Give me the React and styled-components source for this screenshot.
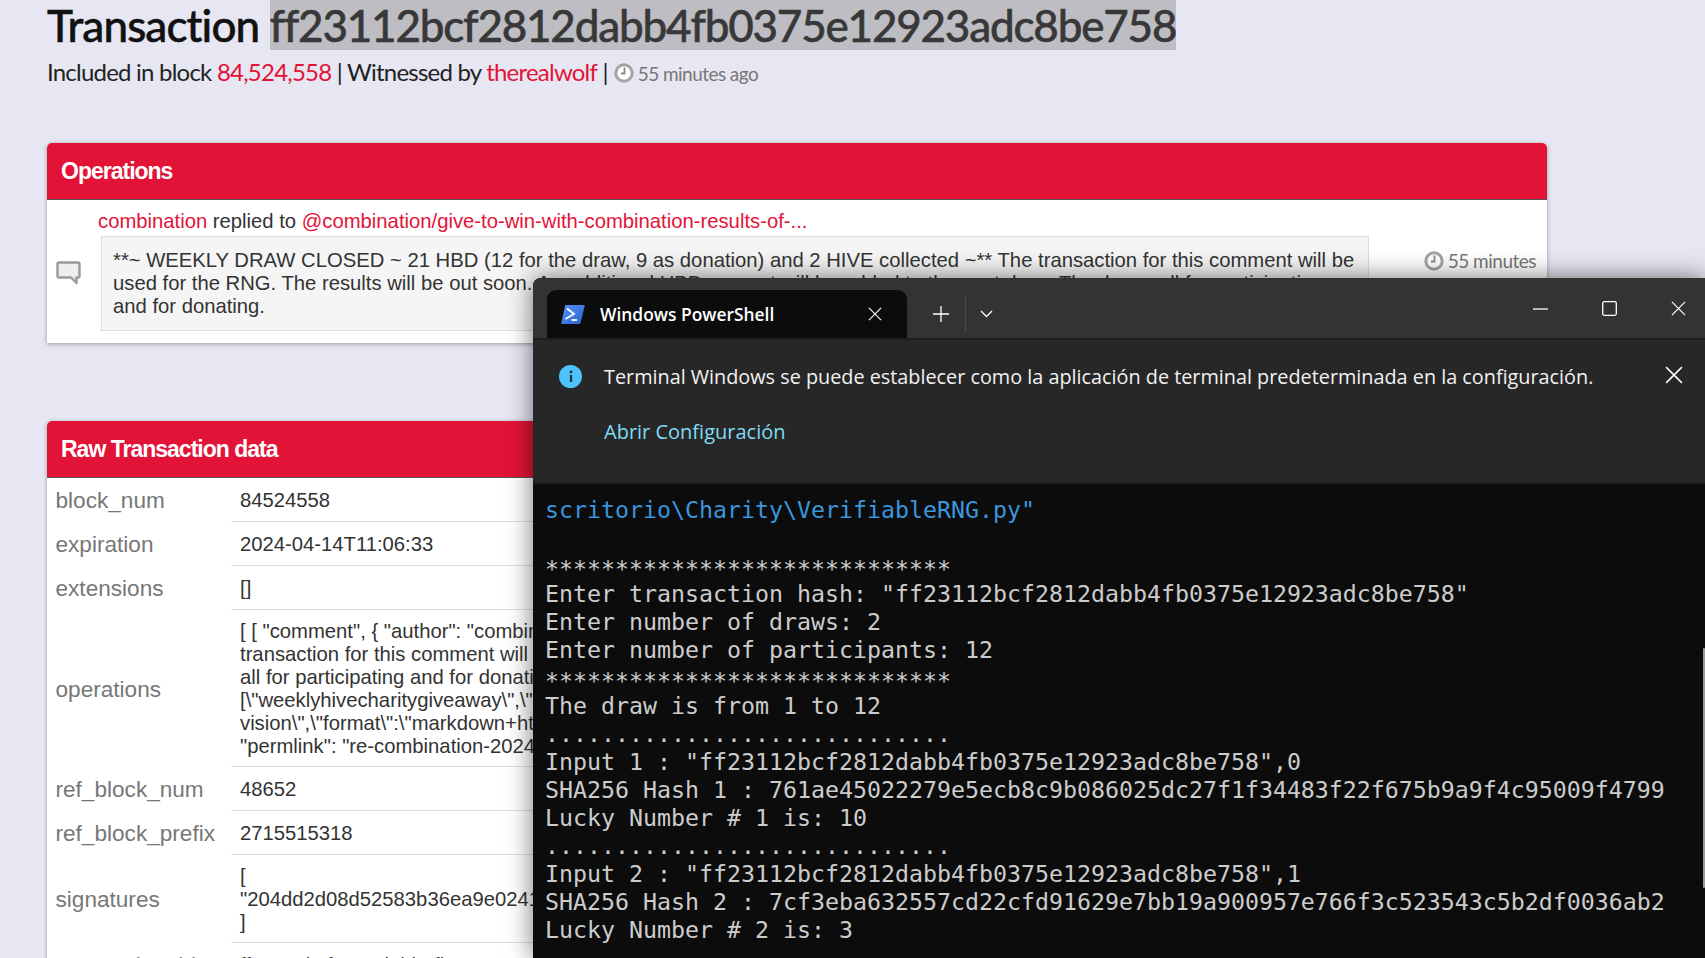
import styled, { createGlobalStyle } from "styled-components";

const GlobalStyle = createGlobalStyle`
  html, body {
    margin: 0;
    height: 958px;
    overflow: hidden;
    background: #e6e7f2;
  }
`;

const Page = styled.div`
  position: relative;
  width: 1705px;
  height: 958px;
  overflow: hidden;
  padding-left: 47px;
  box-sizing: border-box;
  font-family: "Liberation Sans", Arial, sans-serif;
`;

const Title = styled.h1`
  margin: 0;
  height: 50px;
  font-family: Lato, sans-serif;
  font-weight: 500;
  font-size: 44px;
  line-height: 50px;
  letter-spacing: -0.9px;
  -webkit-text-stroke: 0.5px currentColor;
  color: #111;
  white-space: nowrap;
`;

const Selected = styled.span`
  display: inline-block;
  height: 50px;
  background: #bdbdc3;
  color: #383838;
  letter-spacing: -1.2px;
`;

const Meta = styled.div`
  display: flex;
  align-items: center;
  height: 46px;
  padding-bottom: 4px;
  box-sizing: border-box;
  font-family: Lato, sans-serif;
  font-size: 24px;
  letter-spacing: -0.78px;
  color: #222;
  white-space: pre;
`;

const Link = styled.a`
  color: #e31337;
`;

const Ago = styled.span`
  display: inline-flex;
  align-items: center;
  gap: 4px;
  margin: 4px 0 0 6px;
  font-size: 19px;
  letter-spacing: -0.55px;
  color: #777;
`;

const Panel = styled.section`
  width: 1500px;
  margin-top: ${(p) => p.$top}px;
  background: #fff;
  border-radius: 5px 5px 0 0;
  box-shadow: 0 1px 4px rgba(0, 0, 0, 0.35);
`;

const PanelHead = styled.h2`
  margin: 0;
  height: 56px;
  padding-left: 14px;
  border-radius: 5px 5px 0 0;
  border-bottom: 1px solid #555;
  background: #e31337;
  color: #fff;
  font-size: 23px;
  font-weight: 700;
  letter-spacing: -1px;
  line-height: 56px;
`;

const OpRow = styled.div`
  display: flex;
  height: 143px;
`;

const OpIcon = styled.div`
  width: 50px;
  padding: 61px 0 0 9px;
  box-sizing: border-box;
`;

const OpMain = styled.div`
  width: 1272px;
  padding-top: 9px;
  font-size: 20.25px;
  color: #333;
`;

const OpLine = styled.div`
  height: 27px;
  line-height: 24px;
  padding-left: 1px;
`;

const Quote = styled.div`
  margin-left: 4px;
  height: 95px;
  padding: 12px 11px 0;
  box-sizing: border-box;
  border: 1px solid #ddd;
  background: #f5f5f5;
  font-size: 20.25px;
  line-height: 23px;
  color: #333;
`;

const OpTime = styled.div`
  display: flex;
  justify-content: flex-end;
  align-items: center;
  gap: 4px;
  flex: 1;
  height: 23px;
  margin-top: 49px;
  padding-right: 11px;
  font-family: Lato, sans-serif;
  font-size: 19px;
  letter-spacing: -0.5px;
  color: #777;
`;

const Row = styled.div`
  display: flex;
  align-items: center;
`;

const Label = styled.div`
  width: 184px;
  padding: 2px 0 0 8.5px;
  box-sizing: border-box;
  font-size: 22.6px;
  color: #777;
`;

const Value = styled.div`
  flex: 1;
  min-height: 25px;
  padding: 10px 9px 8px 9px;
  border-bottom: 1px solid #ddd;
  font-size: 20.25px;
  line-height: 23px;
  color: #333;
  white-space: pre;
  overflow: hidden;
  display: flex;
  flex-direction: column;
  justify-content: center;
`;

const Window = styled.div`
  position: absolute;
  left: 533px;
  top: 278px;
  right: 0;
  bottom: 0;
  display: flex;
  flex-direction: column;
  background: #0c0c0c;
  border-radius: 8px 0 0 0;
  box-shadow: 0 0 26px rgba(0, 0, 0, 0.55);
  font-family: "Open Sans", sans-serif;
  color: #fff;
`;

const TitleBar = styled.div`
  display: flex;
  align-items: flex-end;
  flex: none;
  height: 60px;
  padding-left: 14px;
  box-sizing: border-box;
  background: #333;
  border-radius: 8px 0 0 0;
`;

const Tab = styled.div`
  display: flex;
  align-items: center;
  width: 360px;
  height: 48px;
  padding: 0 25px 0 14px;
  box-sizing: border-box;
  border-radius: 9px 9px 0 0;
  background: #0c0c0c;
  font-size: 17.4px;
  font-weight: 600;
`;

const TabName = styled.span`
  flex: 1;
  margin-left: 15px;
`;

const TabTools = styled.div`
  display: flex;
  align-items: center;
  height: 36px;
  margin: 0 0 6px 26px;
`;

const ToolDivider = styled.div`
  width: 1px;
  height: 36px;
  margin: 0 14px 0 16px;
  background: #4a4a4a;
`;

const Caption = styled.div`
  display: flex;
  align-items: center;
  gap: 54px;
  margin: 0 19px 22px auto;
`;

const InfoBar = styled.div`
  flex: none;
  height: 146px;
  box-sizing: border-box;
  padding: 21px 20px 0 26px;
  background: #272727;
  border-top: 2px solid #1f1f1f;
  border-bottom: 2px solid #1e1e1e;
`;

const InfoRow = styled.div`
  display: flex;
  align-items: center;
  gap: 22px;
  height: 30px;
  font-size: 19.82px;
  color: #f2f2f2;
  white-space: nowrap;
`;

const InfoDot = styled.div`
  display: flex;
  align-items: center;
  justify-content: center;
  width: 23px;
  height: 23px;
  flex: none;
  border-radius: 50%;
  background: #4cc2ff;
`;

const InfoClose = styled.div`
  display: flex;
  margin: -2px 2px 0 auto;
`;

const InfoLink = styled.div`
  margin: 26px 0 0 45px;
  font-size: 20px;
  line-height: 30px;
  color: #7fdcf5;
`;

const Term = styled.pre`
  flex: 1;
  margin: 0;
  padding: 12px 0 0 12px;
  font-family: "DejaVu Sans Mono", monospace;
  font-size: 23.25px;
  line-height: 28px;
  color: #cccccc;
  position: relative;
`;

const TermBlue = styled.span`
  color: #3a96dd;
`;

const TermStars = styled.span`
  display: inline-block;
  transform: translateY(3px);
`;

const ScrollThumb = styled.div`
  position: absolute;
  right: 0;
  top: 164px;
  width: 2px;
  height: 240px;
  background: #9a9a9a;
  border-radius: 1px;
`;

const Clock = ({ size = 20 }) => (
  <svg width={size} height={size} viewBox="0 0 20 20">
    <circle cx="10" cy="10" r="8.2" fill="#fff" stroke="#a3a3a3" strokeWidth="3" />
    <path d="M10.5 4.5V10.5H7" fill="none" stroke="#888" strokeWidth="1.8" />
  </svg>
);

const Bubble = () => (
  <svg width="25" height="24" viewBox="0 0 25 24">
    <path
      d="M3 1.5H22Q23.5 1.5 23.5 3V15Q23.5 16.5 22 16.5H20.5V22L15 16.5H3Q1.5 16.5 1.5 15V3Q1.5 1.5 3 1.5Z"
      fill="#eeeeee"
      stroke="#999"
      strokeWidth="2.4"
      strokeLinejoin="round"
    />
  </svg>
);

const Cross = ({ size = 15, weight = 1.3 }) => (
  <svg width={size} height={size} viewBox="0 0 16 16">
    <path d="M1 1L15 15M15 1L1 15" stroke="#fff" strokeWidth={weight} fill="none" />
  </svg>
);

const PowerShellIcon = () => (
  <svg width="24" height="19" viewBox="0 0 24 19">
    <defs>
      <linearGradient id="ps" x1="0" y1="0" x2="1" y2="1">
        <stop offset="0" stopColor="#5391fe" />
        <stop offset="1" stopColor="#2b65c9" />
      </linearGradient>
    </defs>
    <path d="M5 0H23Q24 0 23.7 1L19.5 18Q19.2 19 18 19H1Q0 19 0.3 18L4 1Q4.2 0 5 0Z" fill="url(#ps)" />
    <path d="M6 3.5L13 9L4.5 14" fill="none" stroke="#fff" strokeWidth="1.8" />
    <path d="M10.5 15H16" stroke="#fff" strokeWidth="1.8" />
  </svg>
);

const rows = [
  ["block_num", "84524558"],
  ["expiration", "2024-04-14T11:06:33"],
  ["extensions", "[]"],
  [
    "operations",
    `[ [ "comment", { "author": "combination", "body": "**~ WEEKLY DRAW CLOSED ~ 21 HBD (12 for the draw, 9 as donation) and 2 HIVE collected ~** The
transaction for this comment will be used for the RNG. The results will be out soon.
all for participating and for donating.",
[\\"weeklyhivecharitygiveaway\\",\\"hive\\"]
vision\\",\\"format\\":\\"markdown+html\\"}",
"permlink": "re-combination-2024`,
  ],
  ["ref_block_num", "48652"],
  ["ref_block_prefix", "2715515318"],
  [
    "signatures",
    `[
"204dd2d08d52583b36ea9e0241
]`,
  ],
  ["transaction_id", "ff23112bcf2812dabb4fb0375e12923adc8be758"],
];

const HASH = "ff23112bcf2812dabb4fb0375e12923adc8be758";
const STARS = "*".repeat(29);
const DOTS = ".".repeat(29);

const App = () => {
  return (
    <Page>
      <GlobalStyle />
      <Title>
        Transaction <Selected>{HASH}</Selected>
      </Title>
      <Meta>
        Included in block <Link>84,524,558</Link> | Witnessed by <Link>therealwolf</Link> |
        <Ago>
          <Clock />
          55 minutes ago
        </Ago>
      </Meta>

      <Panel $top={47}>
        <PanelHead>Operations</PanelHead>
        <OpRow>
          <OpIcon>
            <Bubble />
          </OpIcon>
          <OpMain>
            <OpLine>
              <Link>combination</Link> replied to{" "}
              <Link>@combination/give-to-win-with-combination-results-of-...</Link>
            </OpLine>
            <Quote>
              **~ WEEKLY DRAW CLOSED ~ 21 HBD (12 for the draw, 9 as donation) and 2 HIVE collected ~** The
              transaction for this comment will be used for the RNG. The results will be out soon. An
              additional HBD amount will be added to the next draw. Thank you all for participating and for
              donating.
            </Quote>
          </OpMain>
          <OpTime>
            <Clock />
            55 minutes
          </OpTime>
        </OpRow>
      </Panel>

      <Panel $top={78}>
        <PanelHead>Raw Transaction data</PanelHead>
        {rows.map(([name, value]) => (
          <Row key={name}>
            <Label>{name}</Label>
            <Value>{value}</Value>
          </Row>
        ))}
      </Panel>

      <Window>
        <TitleBar>
          <Tab>
            <PowerShellIcon />
            <TabName>Windows PowerShell</TabName>
            <Cross size={14} />
          </Tab>
          <TabTools>
            <svg width="16" height="16" viewBox="0 0 16 16">
              <path d="M8 0V16M0 8H16" stroke="#fff" strokeWidth="1.3" />
            </svg>
            <ToolDivider />
            <svg width="13" height="8" viewBox="0 0 13 8">
              <path d="M1 1L6.5 6.5L12 1" stroke="#fff" strokeWidth="1.3" fill="none" />
            </svg>
          </TabTools>
          <Caption>
            <svg width="15" height="2" viewBox="0 0 15 2">
              <path d="M0 1H15" stroke="#fff" strokeWidth="1.3" />
            </svg>
            <svg width="15" height="15" viewBox="0 0 15 15">
              <rect x="0.7" y="0.7" width="13.6" height="13.6" rx="1.5" fill="none" stroke="#fff" strokeWidth="1.3" />
            </svg>
            <Cross />
          </Caption>
        </TitleBar>
        <InfoBar>
          <InfoRow>
            <InfoDot>
              <svg width="4" height="12" viewBox="0 0 4 12">
                <circle cx="2" cy="2" r="1.4" fill="#17303f" />
                <path d="M2 5V12" stroke="#17303f" strokeWidth="2.2" />
              </svg>
            </InfoDot>
            Terminal Windows se puede establecer como la aplicación de terminal predeterminada en la configuración.
            <InfoClose>
              <Cross size={18} />
            </InfoClose>
          </InfoRow>
          <InfoLink>Abrir Configuración</InfoLink>
        </InfoBar>
        <Term>
          <TermBlue>scritorio\Charity\VerifiableRNG.py"</TermBlue>
          {`

`}
          <TermStars>{STARS}</TermStars>
          {`
Enter transaction hash: "${HASH}"
Enter number of draws: 2
Enter number of participants: 12
`}
          <TermStars>{STARS}</TermStars>
          {`
The draw is from 1 to 12
${DOTS}
Input 1 : "${HASH}",0
SHA256 Hash 1 : 761ae45022279e5ecb8c9b086025dc27f1f34483f22f675b9a9f4c95009f4799
Lucky Number # 1 is: 10
${DOTS}
Input 2 : "${HASH}",1
SHA256 Hash 2 : 7cf3eba632557cd22cfd91629e7bb19a900957e766f3c523543c5b2df0036ab2
Lucky Number # 2 is: 3`}
          <ScrollThumb />
        </Term>
      </Window>
    </Page>
  );
};

export default App;
